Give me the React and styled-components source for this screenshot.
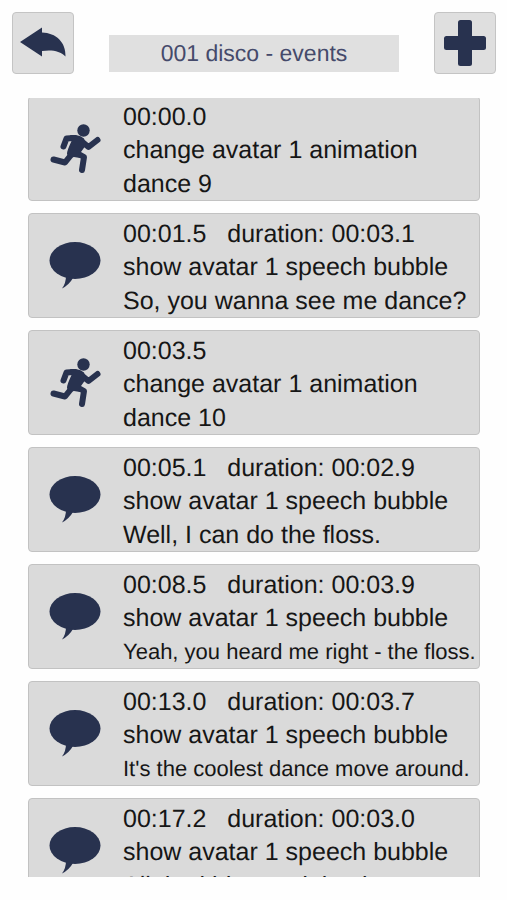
import React from 'react';
import styled, { createGlobalStyle } from 'styled-components';

const GlobalStyle = createGlobalStyle`
  * {
    box-sizing: border-box;
  }

  body {
    margin: 0;
    background-color: #fefefe;
    font-family: 'Liberation Sans', Arial, sans-serif;
    text-rendering: geometricPrecision;
  }
`;

const Page = styled.div`
  display: flex;
  flex-direction: column;
  height: 100vh;
  padding: 12px 11px 23px 12px;
`;

const Header = styled.header`
  display: flex;
  align-items: flex-start;
  justify-content: space-between;
  gap: 35px;
`;

const IconButton = styled.button`
  display: flex;
  align-items: center;
  justify-content: center;
  flex: none;
  width: 62px;
  height: 62px;
  padding: 0;
  background-color: #dfdfdf;
  border: 1px solid #c4c4c4;
  border-radius: 4px;
  cursor: pointer;

  svg {
    width: 60px;
    height: 60px;
  }
`;

const Title = styled.h1`
  flex: 1;
  margin: 23px 0 0;
  background-color: #e0e0e0;
  color: #454a6b;
  font-size: 23px;
  font-weight: normal;
  line-height: 37px;
  text-align: center;
`;

const EventScroller = styled.main`
  flex: 1;
  min-height: 0;
  margin: 24px 16px 0;
  overflow: hidden;
`;

/* The list sits slightly scrolled, so the first card's top border is hidden */
const EventList = styled.ul`
  display: flex;
  flex-direction: column;
  gap: 12px;
  margin: -2px 0 0;
  padding: 0;
  list-style: none;
`;

const EventCard = styled.li`
  display: flex;
  align-items: flex-start;
  height: 105px;
  padding: 4px 0 0 16px;
  background-color: #dadada;
  border: 1px solid #c2c2c2;
  border-radius: 4px;
`;

const EventIcon = styled.svg`
  flex: none;
  width: 62px;
  height: 62px;
  margin: 16px 16px 0 0;
`;

const EventText = styled.div`
  color: #161616;
  font-size: 25px;
  line-height: 33px;
  white-space: pre;
`;

const Detail = styled.div`
  font-size: ${(props) => (props.$small ? '22px' : '25px')};
  line-height: ${(props) => (props.$small ? '33px' : '35px')};
`;

const NAVY = '#28324f';

const BackIcon = () => (
  <svg viewBox="0 0 60 60" aria-hidden="true">
    <path
      d="M7 29 L29 14.5 V19.5 C43 20 53 29 52.5 43.5 C47 38 39 36.5 29 38 V43.5 Z"
      fill={NAVY}
    />
  </svg>
);

const PlusIcon = () => (
  <svg viewBox="0 0 60 60" aria-hidden="true">
    <rect x="23" y="7" width="14" height="46" rx="2.5" fill={NAVY} />
    <rect x="9" y="23" width="42" height="14" rx="2.5" fill={NAVY} />
  </svg>
);

const RunnerIcon = () => (
  <EventIcon viewBox="0 0 62 62" aria-hidden="true">
    <circle cx="38.5" cy="13.5" r="6.2" fill={NAVY} />
    <g fill="none" stroke={NAVY} strokeWidth="6" strokeLinecap="round" strokeLinejoin="round">
      <path d="M18.5 29.5 L21.5 21.5 L29 21" />
      <path d="M35 23 L43.5 30 L52.5 23" />
      <path d="M8.5 42.5 L20 45.5 L26 38" />
      <path d="M31 35.5 L39 40 L37 53" />
    </g>
    <path
      d="M25 18 L31 18 Q36 18.5 39 21.5 L41 28 L36 35 L35 41 L29 40 Q23.5 41 22 37 Q21.5 34.5 27 23 Z"
      fill={NAVY}
    />
  </EventIcon>
);

const SpeechIcon = () => (
  <EventIcon viewBox="0 0 62 62" aria-hidden="true">
    <ellipse cx="30" cy="26.5" rx="25.5" ry="18.5" fill={NAVY} />
    <path d="M21 42 Q21 49 17 54.5 Q24 51 28 44 Z" fill={NAVY} />
  </EventIcon>
);

const events = [
  { time: '00:00.0', action: 'change avatar 1 animation', detail: 'dance 9' },
  { time: '00:01.5', duration: '00:03.1', action: 'show avatar 1 speech bubble', detail: 'So, you wanna see me dance?' },
  { time: '00:03.5', action: 'change avatar 1 animation', detail: 'dance 10' },
  { time: '00:05.1', duration: '00:02.9', action: 'show avatar 1 speech bubble', detail: 'Well, I can do the floss.' },
  { time: '00:08.5', duration: '00:03.9', action: 'show avatar 1 speech bubble', detail: 'Yeah, you heard me right - the floss.', small: true },
  { time: '00:13.0', duration: '00:03.7', action: 'show avatar 1 speech bubble', detail: "It's the coolest dance move around.", small: true },
  { time: '00:17.2', duration: '00:03.0', action: 'show avatar 1 speech bubble', detail: 'All the kids are doing it.' },
];

const App = () => (
  <>
    <GlobalStyle />
    <Page>
      <Header>
        <IconButton type="button" aria-label="Back">
          <BackIcon />
        </IconButton>
        <Title>001 disco - events</Title>
        <IconButton type="button" aria-label="Add event">
          <PlusIcon />
        </IconButton>
      </Header>
      <EventScroller>
        <EventList>
          {events.map((event) => (
            <EventCard key={event.time}>
              {event.duration ? <SpeechIcon /> : <RunnerIcon />}
              <EventText>
                <div>{event.duration ? `${event.time}   duration: ${event.duration}` : event.time}</div>
                <div>{event.action}</div>
                <Detail $small={event.small}>{event.detail}</Detail>
              </EventText>
            </EventCard>
          ))}
        </EventList>
      </EventScroller>
    </Page>
  </>
);

export default App;
